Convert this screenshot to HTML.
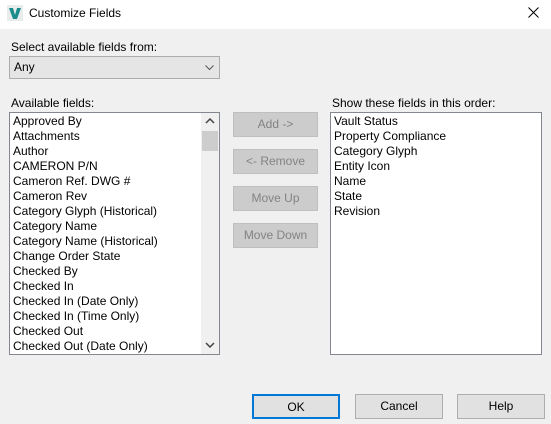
<!DOCTYPE html><html><head><style>
body{margin:0;width:551px;height:424px;background:#f0f0f0;font-family:"Liberation Sans",sans-serif;font-size:12px;color:#000;position:relative;overflow:hidden}
.a{position:absolute}
.title{left:0;top:0;width:551px;height:29px;background:#fff}
.list{background:#fff;border:1px solid #828790;box-sizing:border-box}
.row{height:15px;line-height:15px;padding-left:3px;white-space:nowrap}
.btn{box-sizing:border-box;border:1px solid #adadad;background:#e1e1e1;text-align:center;line-height:23px}
.dis{border-color:#bfbfbf;background:#cccccc;color:#838383}
</style></head><body>
<div class="a title"></div>
<div class="a" style="left:7px;top:5px;width:16px;height:16px;background:#e8ecec"><svg width="16" height="16"><path d="M2 3 L6 3 L8 10 L10 3 L14 3 L10 14 L6 14 Z" fill="#1a8c8c"/></svg></div>
<div class="a" style="left:29px;top:6px">Customize Fields</div>
<svg class="a" style="left:528px;top:7px" width="11" height="11"><path d="M0.5 0.5 L10.5 10.5 M10.5 0.5 L0.5 10.5" stroke="#000" stroke-width="1"/></svg>
<div class="a" style="left:11px;top:40px">Select available fields from:</div>
<div class="a btn" style="left:9px;top:56px;width:211px;height:23px;text-align:left;padding-left:4px;line-height:21px;border-color:#acacac;background:#e5e5e5">Any<svg class="a" style="right:5px;top:8px" width="9" height="6"><path d="M0.5 0.5 L4.5 4.5 L8.5 0.5" fill="none" stroke="#555"/></svg></div>
<div class="a" style="left:11px;top:96px">Available fields:</div>
<div class="a list" style="left:9px;top:112px;width:211px;height:243px;padding-top:1px">
<div class="row">Approved By</div><div class="row">Attachments</div><div class="row">Author</div><div class="row">CAMERON P/N</div><div class="row">Cameron Ref. DWG #</div><div class="row">Cameron Rev</div><div class="row">Category Glyph (Historical)</div><div class="row">Category Name</div><div class="row">Category Name (Historical)</div><div class="row">Change Order State</div><div class="row">Checked By</div><div class="row">Checked In</div><div class="row">Checked In (Date Only)</div><div class="row">Checked In (Time Only)</div><div class="row">Checked Out</div><div class="row">Checked Out (Date Only)</div>
<div class="a" style="left:191px;top:0;width:18px;height:241px;background:#f0f0f0"></div>
<div class="a" style="left:192px;top:18px;width:16px;height:20px;background:#cdcdcd"></div>
<svg class="a" style="left:195px;top:5px" width="10" height="6"><path d="M1 5 L5 1 L9 5" fill="none" stroke="#444" stroke-width="1.5"/></svg>
<svg class="a" style="left:195px;top:229px" width="10" height="6"><path d="M1 1 L5 5 L9 1" fill="none" stroke="#444" stroke-width="1.5"/></svg>
</div>
<div class="a btn dis" style="left:233px;top:112px;width:85px;height:25px">Add -&gt;</div>
<div class="a btn dis" style="left:233px;top:149px;width:85px;height:25px">&lt;- Remove</div>
<div class="a btn dis" style="left:233px;top:186px;width:85px;height:25px">Move Up</div>
<div class="a btn dis" style="left:233px;top:223px;width:85px;height:25px">Move Down</div>
<div class="a" style="left:332px;top:96px">Show these fields in this order:</div>
<div class="a list" style="left:330px;top:112px;width:212px;height:243px;padding-top:1px">
<div class="row">Vault Status</div><div class="row">Property Compliance</div><div class="row">Category Glyph</div><div class="row">Entity Icon</div><div class="row">Name</div><div class="row">State</div><div class="row">Revision</div>
</div>
<div class="a btn" style="left:252px;top:394px;width:88px;height:25px;border:2px solid #0078d7;line-height:22px">OK</div>
<div class="a btn" style="left:355px;top:394px;width:88px;height:25px">Cancel</div>
<div class="a btn" style="left:457px;top:394px;width:88px;height:25px">Help</div>
</body></html>
